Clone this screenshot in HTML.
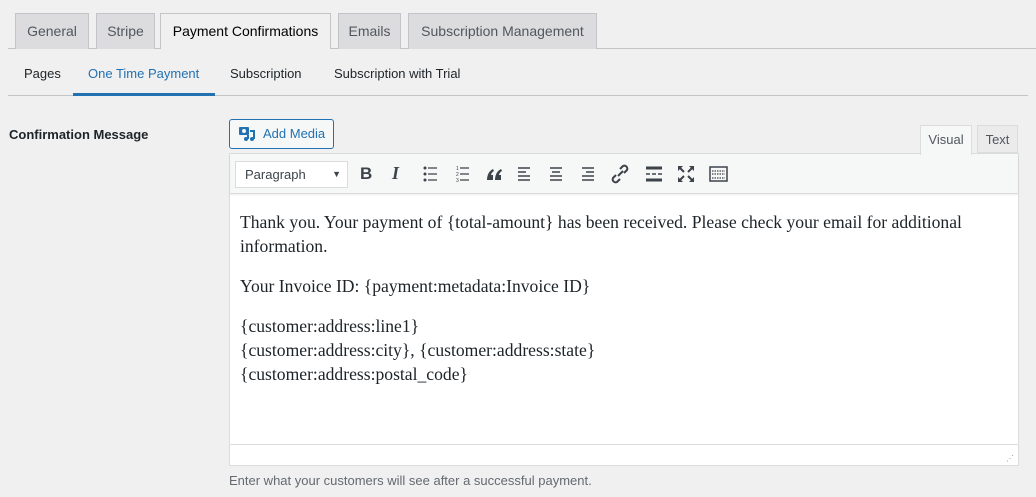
<!DOCTYPE html>
<html><head><meta charset="utf-8"><style>
*{box-sizing:border-box;margin:0;padding:0}
body{width:1036px;height:497px;background:#f0f0f1;font-family:"Liberation Sans",sans-serif;color:#1d2327;position:relative;overflow:hidden}
.a{position:absolute}
.tab{position:absolute;top:13px;height:36px;background:#dcdcde;border:1px solid #c3c4c7;border-bottom:none;font-size:14px;color:#50575e;line-height:34px;text-align:center}
.tab.on{background:#f0f0f1;color:#000;height:36px;z-index:2}
.sub{position:absolute;top:66px;font-size:13px;color:#1d2327}
.ic{position:absolute;top:164px}
.ed p{margin:0}
</style></head><body>
<div class="a" style="left:8px;top:48px;width:1028px;height:1px;background:#c3c4c7"></div>
<div class="tab" style="left:15px;width:74px">General</div>
<div class="tab" style="left:96px;width:59px">Stripe</div>
<div class="tab on" style="left:160px;width:171px">Payment Confirmations</div>
<div class="tab" style="left:338px;width:63px">Emails</div>
<div class="tab" style="left:408px;width:189px">Subscription Management</div>

<div class="sub" style="left:24px">Pages</div>
<div class="sub" style="left:88px;color:#2271b1">One Time Payment</div>
<div class="sub" style="left:230px">Subscription</div>
<div class="sub" style="left:334px">Subscription with Trial</div>
<div class="a" style="left:8px;top:95px;width:1020px;height:1px;background:#c3c4c7"></div>
<div class="a" style="left:73px;top:93px;width:142px;height:3px;background:#2271b1"></div>

<div class="a" style="left:9px;top:127px;font-size:13px;font-weight:bold">Confirmation Message</div>

<div class="a" style="left:229px;top:119px;width:105px;height:30px;border:1px solid #2271b1;border-radius:3px;background:#f6f7f7;color:#2271b1;font-size:13px;line-height:28px;padding-left:33px">Add Media</div>
<svg class="a" style="left:238px;top:126px" width="20" height="16" viewBox="0 0 20 16"><rect x="1" y="1" width="10" height="8" rx="1" fill="#2271b1"/><circle cx="6" cy="5" r="2" fill="#f6f7f7"/><path d="M12 5h4v8" stroke="#2271b1" stroke-width="2" fill="none"/><circle cx="14" cy="13" r="2" fill="#2271b1"/><circle cx="8" cy="13" r="2" fill="#2271b1"/><path d="M10 9v4" stroke="#2271b1" stroke-width="2"/></svg>

<div class="a" style="left:920px;top:125px;width:52px;height:30px;background:#f6f7f7;border:1px solid #dcdcde;border-bottom:none;font-size:13px;color:#50575e;line-height:28px;text-align:center;z-index:2">Visual</div>
<div class="a" style="left:977px;top:125px;width:41px;height:28px;background:#ebebeb;border:1px solid #dcdcde;font-size:13px;color:#50575e;line-height:28px;text-align:center">Text</div>

<div class="a" style="left:229px;top:153px;width:790px;height:313px;border:1px solid #dcdcde;background:#fff"></div>
<div class="a" style="left:230px;top:154px;width:788px;height:40px;background:#f6f7f7;border-bottom:1px solid #dcdcde;box-shadow:0 1px 2px rgba(0,0,0,.08)"></div>
<div class="a" style="left:235px;top:161px;width:113px;height:27px;background:#fff;border:1px solid #dcdcde;font-size:13px;color:#3c434a;line-height:25px;padding-left:9px">Paragraph<span style="position:absolute;right:6px;top:0;font-size:9px">▼</span></div>
<div class="ic" style="left:360px;font-weight:bold;font-size:17px;color:#3c434a;top:164px">B</div>
<div class="ic" style="left:392px;font-style:italic;font-family:'Liberation Serif';font-weight:bold;font-size:18px;color:#3c434a;top:163px">I</div>
<svg class="a" style="left:420px;top:164px" width="330" height="20" viewBox="0 0 330 20" fill="#3c434a" stroke="#3c434a">
<g stroke="none"><circle cx="5" cy="4" r="1.5"/><circle cx="5" cy="10" r="1.5"/><circle cx="5" cy="16" r="1.5"/></g>
<path d="M8 4h9M8 10h9M8 16h9" stroke-width="1.3"/>
<g stroke="none" font-size="5" font-family="Liberation Sans"><text x="36" y="6">1</text><text x="36" y="12">2</text><text x="36" y="18">3</text></g>
<path d="M40 4h9M40 10h9M40 16h9" stroke-width="1.3"/>
<g stroke="none"><path d="M67 16c0-5 2-9 6-11l1 2c-2 1-3 3-3 4h2v5z"/><path d="M75 16c0-5 2-9 6-11l1 2c-2 1-3 3-3 4h2v5z"/></g>
<path d="M98 4h12M98 8h8M98 12h12M98 16h12" stroke-width="1.6"/>
<path d="M130 4h12M132 8h8M130 12h12M130 16h12" stroke-width="1.6"/>
<path d="M162 4h12M166 8h8M162 12h12M162 16h12" stroke-width="1.6"/>
<path d="M196 11l-3 3a3 3 0 0 0 4 4l3-3M204 9l3-3a3 3 0 0 0-4-4l-3 3M198 12l5-5" stroke-width="2" fill="none"/>
<path d="M226 4h16M226 16h16" stroke-width="3"/><path d="M226 10h4M232 10h4M238 10h4" stroke-width="1.5"/>
<path d="M260 4l4 4M272 4l-4 4M260 16l4-4M272 16l-4-4" stroke-width="2"/>
<g stroke="none"><path d="M258 2h5l-5 5z"/><path d="M274 2h-5l5 5z"/><path d="M258 18h5l-5-5z"/><path d="M274 18h-5l5-5z"/></g>
<rect x="290" y="3" width="17" height="14" fill="none" stroke-width="1.5"/><path d="M292 7h13M292 10h13M292 14h13" stroke-width="1.3" stroke-dasharray="1.5 1"/>
</svg>

<div class="a ed" style="left:240px;top:210px;width:770px;font-family:'Liberation Serif',serif;font-size:17.6px;line-height:24px;color:#1d2327">
<p>Thank you. Your payment of {total-amount} has been received. Please check your email for additional information.</p>
<p style="margin-top:16px">Your Invoice ID: {payment:metadata:Invoice ID}</p>
<p style="margin-top:16px">{customer:address:line1}<br>{customer:address:city}, {customer:address:state}<br>{customer:address:postal_code}</p>
</div>
<div class="a" style="left:230px;top:444px;width:788px;height:1px;background:#dcdcde"></div>
<div class="a" style="left:1006px;top:454px;color:#8c8f94;font-size:8px">⋰</div>

<div class="a" style="left:229px;top:473px;font-size:13px;color:#646970">Enter what your customers will see after a successful payment.</div>
</body></html>
